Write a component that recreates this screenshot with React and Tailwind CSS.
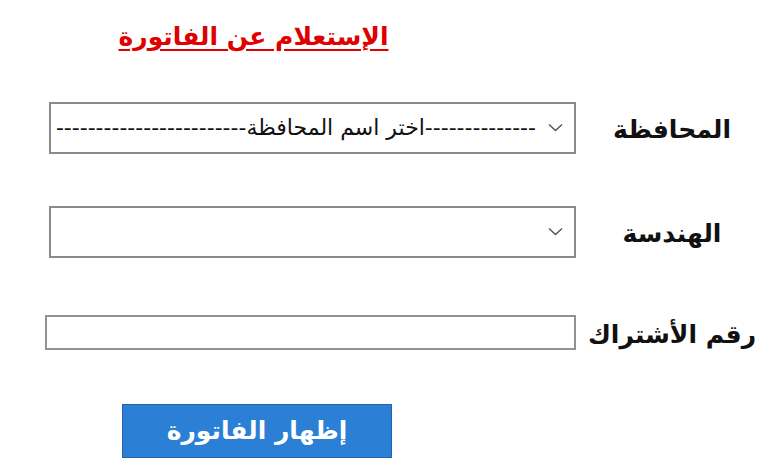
const arabic = { fontFamily: '"DejaVu Sans", "Noto Sans", sans-serif' };

function Chevron() {
  return (
    <svg width="15" height="9" viewBox="0 0 15 9" fill="none" className="shrink-0">
      <path d="M1 1.5L7.5 7.5L14 1.5" stroke="#555" strokeWidth="1.4" />
    </svg>
  );
}

function SelectBox({ text }) {
  return (
    <div className="ml-[49px] w-[527px] h-[52px] border-2 border-[#8a8a8a] bg-white flex items-center justify-end pr-[11px] pl-[6px] gap-[12px] overflow-hidden">
      {text && (
        <span dir="rtl" className="text-[22px] text-[#111] whitespace-nowrap" style={arabic}>
          {text}
        </span>
      )}
      <Chevron />
    </div>
  );
}

function Label({ children }) {
  return (
    <div dir="rtl" className="w-[180px] ml-[6px] mt-[4px] text-center text-[25px] leading-none font-bold text-[#111] whitespace-nowrap" style={arabic}>
      {children}
    </div>
  );
}

export default function App() {
  return (
    <div className="w-[780px] h-[470px] bg-white pt-[18px] overflow-hidden">
      <div
        dir="rtl"
        className="ml-[100px] w-[307px] text-center text-[25px] font-bold text-[#e00000] underline underline-offset-4"
        style={arabic}
      >
        الإستعلام عن الفاتورة
      </div>

      <div className="mt-[46px] flex items-center">
        <SelectBox text="--------------اختر اسم المحافظة------------------------" />
        <Label>المحافظة</Label>
      </div>

      <div className="mt-[52px] flex items-center">
        <SelectBox />
        <Label>الهندسة</Label>
      </div>

      <div className="mt-[57px] flex items-center">
        <input className="ml-[45px] w-[531px] h-[35px] border-2 border-[#8d9396] bg-white outline-none" />
        <Label>رقم الأشتراك</Label>
      </div>

      <button
        dir="rtl"
        className="mt-[54px] ml-[122px] w-[270px] h-[54px] bg-[#2b80d6] border border-[#1f64ad] text-white text-[25px] font-bold"
        style={arabic}
      >
        إظهار الفاتورة
      </button>
    </div>
  );
}
